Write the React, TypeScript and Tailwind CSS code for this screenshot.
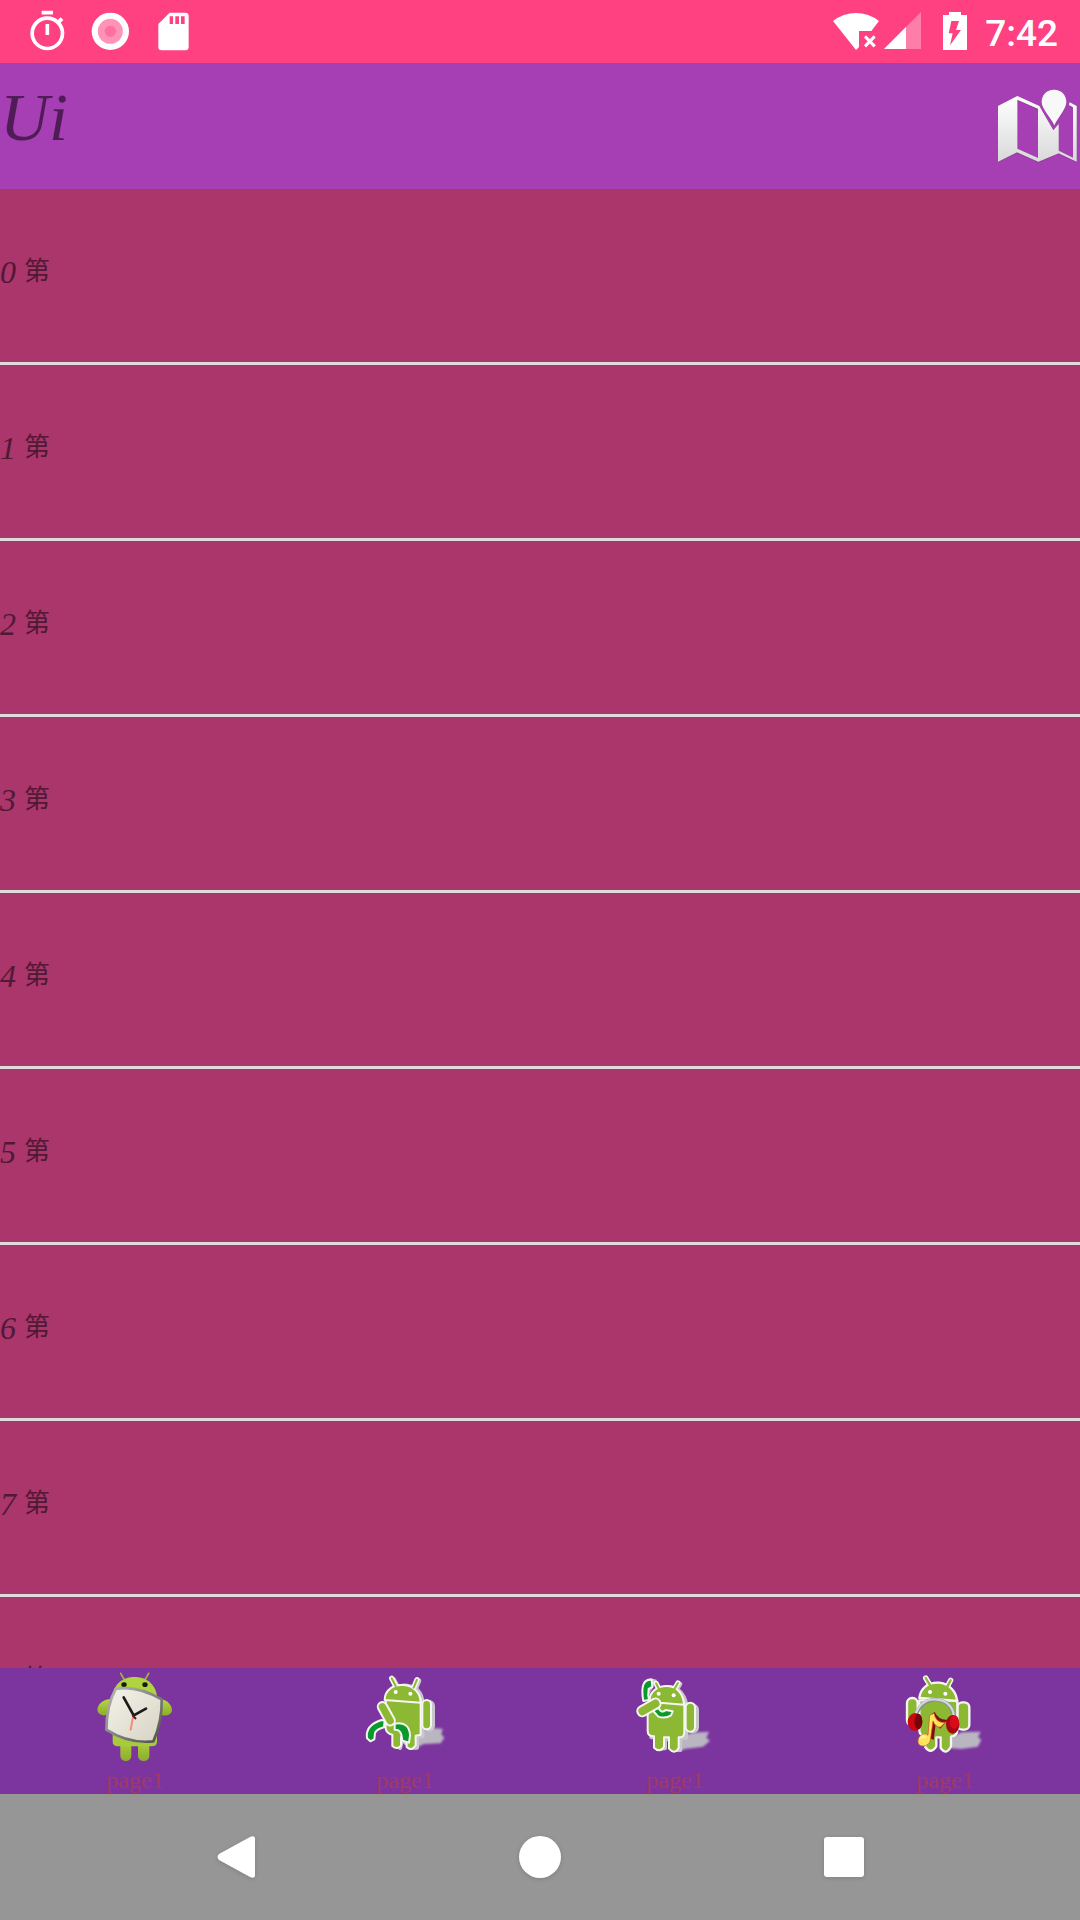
import React from "react";

const rows = [0, 1, 2, 3, 4, 5, 6, 7, 8];

function StatusBar() {
  return (
    <header className="flex h-[63px] shrink-0 items-center justify-between bg-[#ff4081] pl-7 pr-[22px] text-white">
      <div className="flex items-center gap-[22px]">
        <svg className="h-[45px] w-10" viewBox="84 27 120 135" fill="none" stroke="currentColor" aria-label="Timer">
          <circle cx="142" cy="100" r="45.500" strokeWidth="11" />
          <path d="M125 38H159M142 72V105" strokeWidth="11" />
          <path d="M174 68L186 56" strokeWidth="12" />
        </svg>
        <svg className="h-[45px] w-10" viewBox="270 27 120 135" fill="currentColor" aria-label="Recording">
          <circle cx="331" cy="94" r="56" />
          <circle cx="331" cy="94" r="37.500" fill="#ff93b7" />
          <circle cx="331" cy="94" r="17" fill="#ff70a1" />
        </svg>
        <svg className="h-[45px] w-10" viewBox="456 27 120 135" aria-label="Storage card">
          <path d="M509 38H556Q566 38 566 48V141Q566 151 556 151H485Q475 151 475 141V72Z" fill="currentColor" />
          <path d="M509 49H519V72H509ZM526 49H537V72H526ZM543 49H554V72H543Z" fill="#ff4081" />
        </svg>
      </div>
      <div className="flex items-center">
        <svg className="h-[45px] w-12" viewBox="66 27 144 135" fill="currentColor" aria-label="No Wi-Fi">
          <path d="M69 63Q100 39 138 39T207 63L184 93H147V141L138 150Z" />
          <path d="M165 109L194 139M194 109L165 139" stroke="currentColor" strokeWidth="9" fill="none" />
        </svg>
        <svg className="ml-[3px] h-[45px] w-[39px]" viewBox="219 27 117 135" fill="currentColor" aria-label="Signal">
          <path d="M333 36V147H222Z" fill="#ff7da9" />
          <path d="M288 81V147H222Z" />
        </svg>
        <svg className="ml-5 h-[45px] w-[26px]" viewBox="396 27 78 135" aria-label="Battery charging">
          <path d="M417 36H453V45H471V150H399V45H417Z" fill="currentColor" />
          <path d="M424 63H447L438 90H453L420 136L428 100H416Z" fill="#ff4081" />
        </svg>
        <time className="ml-[17px] pt-1 font-['Roboto',sans-serif] text-[37px] font-medium leading-[42px]">7:42</time>
      </div>
    </header>
  );
}

function MapIcon() {
  return (
    <svg className="size-[84px]" viewBox="558 252 252 252" aria-hidden="true">
      <defs>
        <linearGradient id="mapFill" x1="0" y1="0" x2="0" y2="1">
          <stop offset="0" stopColor="#ffffff" />
          <stop offset="1" stopColor="#d9d9d9" />
        </linearGradient>
        <filter id="mapShadow" x="-10%" y="-10%" width="120%" height="120%">
          <feDropShadow dx="0" dy="1" stdDeviation="2" floodColor="#43204d" floodOpacity="0.7" />
        </filter>
      </defs>
      <g filter="url(#mapShadow)">
        <path
          fillRule="evenodd"
          fill="url(#mapFill)"
          d="M564 318L622 288L688 318L730 391L746 372V452L789 473V322L777 315L779 307L800 318V485L746 460L685 485L621 457L564 485ZM622 299V446L684 474V326Z"
        />
        <path d="M732 269C754 269 769 285 769 306C769 326 745 350 733 376C721 350 695 326 695 306C695 285 710 269 732 269Z" fill="#f8f8f8" />
      </g>
    </svg>
  );
}

function ClockRobot() {
  return (
    <svg className="h-[100px] w-[120px] shrink-0" viewBox="-15 54 360 300" aria-hidden="true">
      <defs>
        <linearGradient id="robotGreen" x1="0" y1="0" x2="0" y2="1">
          <stop offset="0" stopColor="#b5d63f" />
          <stop offset="1" stopColor="#8aad2e" />
        </linearGradient>
        <linearGradient id="rim" x1="0" y1="0" x2="1" y2="1">
          <stop offset="0" stopColor="#b9bab8" />
          <stop offset="1" stopColor="#4c4f4d" />
        </linearGradient>
        <linearGradient id="face" x1="0" y1="0" x2="1" y2="1">
          <stop offset="0" stopColor="#f5f3ea" />
          <stop offset="1" stopColor="#d6d3c4" />
        </linearGradient>
      </defs>
      <path d="M122 70L134 91M206 70L194 91" stroke="#9abd39" strokeWidth="5" strokeLinecap="round" />
      <rect x="121" y="262" width="33" height="71" rx="16" fill="url(#robotGreen)" />
      <rect x="174" y="262" width="34" height="71" rx="16" fill="url(#robotGreen)" />
      <path d="M98 235H231V276Q230 289 216 289H114Q98 288 98 276Z" fill="#a6cb3b" />
      <path d="M90 148C73 146 52 162 52 180C54 196 75 200 85 192ZM240 148C259 147 276 165 276 181C274 197 252 201 240 192Z" fill="url(#robotGreen)" />
      <path d="M97 145C98 105 126 81 164 81S231 106 232 149Z" fill="#b0d43f" />
      <ellipse cx="132" cy="104" rx="8" ry="7" fill="#151b12" />
      <ellipse cx="195" cy="104" rx="8" ry="7" fill="#151b12" />
      <path d="M107 117Q169 105 245 148Q247 214 220 274Q145 282 79 239Q80 165 107 117Z" fill="url(#face)" stroke="url(#rim)" strokeWidth="8" strokeLinejoin="round" />
      <path d="M159 201L152 239" stroke="#f58a7d" strokeWidth="6" strokeLinecap="round" />
      <path d="M131 142L161 196L198 176" stroke="#171c1a" strokeWidth="8" strokeLinecap="round" fill="none" />
      <path d="M157 195L168 207" stroke="#60191b" strokeWidth="6" />
    </svg>
  );
}

function Shadow({ d }: { d: string }) {
  return <path d={d} fill="#b9b6c2" className="blur-[3px]" />;
}

function DialRobot() {
  return (
    <svg className="h-[100px] w-[120px] shrink-0" viewBox="-15 54 360 300" aria-hidden="true">
      <Shadow d="M205 250L237 234L278 236L274 253L283 263L272 280L222 282L190 297Z" />
      <g transform="translate(7 3)" fill="#aaa4b4" stroke="#c9c6ce" strokeWidth="12" strokeLinejoin="round">
        <path d="M107 148Q120 101 164 104Q207 108 211 157V256H194V290H174L150 265L143 291L126 278V248L107 230Z" />
        <path d="M125 85L137 108M201 89L191 113" strokeLinecap="round" />
        <rect x="219" y="153" width="23" height="83" rx="12" />
      </g>
      <g fill="#8db833" stroke="#f5f6f2" strokeWidth="6" strokeLinejoin="round">
        <path d="M125 85L137 108M201 89L191 113" strokeWidth="16" strokeLinecap="round" />
        <path d="M107 148H212V254L197 257V286Q185 305 170 291V269L153 261V287Q142 301 127 288V254Q109 250 107 235Z" />
        <path d="M104 150C104 120 131 102 161 105C192 107 212 130 212 158Z" />
        <path d="M125 85L137 108M201 89L191 113" stroke="#8db833" strokeLinecap="round" />
        <rect x="217" y="150" width="26" height="88" rx="13" />
        <path d="M61 274L51 265Q45 226 94 210L104 212L102 232Q80 238 75 249L73 268Z" fill="#0b982d" />
        <path d="M134 221Q179 214 180 257L177 278L157 272L154 254Q150 238 134 239Z" fill="#0b982d" />
        <rect x="94" y="154" width="28" height="76" rx="14" transform="rotate(-29 107 190)" />
      </g>
      <circle cx="137" cy="126" r="6" fill="white" />
      <circle cx="181" cy="131" r="6" fill="white" />
    </svg>
  );
}

function CallRobot() {
  return (
    <svg className="h-[100px] w-[120px] shrink-0" viewBox="-15 54 360 300" aria-hidden="true">
      <Shadow d="M182 265L214 248L267 245L259 263L270 272L249 290L198 296L174 303Z" />
      <g transform="translate(7 3)" fill="#aaa4b4" stroke="#c9c6ce" strokeWidth="12" strokeLinejoin="round">
        <path d="M88 150Q96 112 137 109Q179 108 192 160V260H174V297H153L146 265H128V292L106 293V259H87Z" />
        <path d="M174 99L162 119" strokeLinecap="round" />
        <rect x="199" y="164" width="25" height="77" rx="12" />
        <path d="M73 148Q61 98 87 88L101 92" />
      </g>
      <g fill="#8db833" stroke="#f5f6f2" strokeWidth="6" strokeLinejoin="round">
        <path d="M70 153Q58 86 95 89L97 111L86 117Q83 135 87 150Z" fill="#0b982d" />
        <path d="M108 100L118 119M174 99L162 119" strokeWidth="16" strokeLinecap="round" />
        <path d="M83 158H193V247Q193 263 176 262V294Q164 315 147 296V262H132V290Q120 310 102 293V259Q83 259 83 243Z" />
        <path d="M88 151C90 124 112 107 143 108C172 110 190 132 192 164L119 158Z" />
        <path d="M108 100L118 119M174 99L162 119" stroke="#8db833" strokeLinecap="round" />
        <rect x="197" y="158" width="28" height="87" rx="14" />
        <path d="M97 180L116 174Q124 192 137 180L158 184L153 196Q137 207 115 200Z" fill="#0b982d" />
        <rect x="49" y="158" width="75" height="30" rx="14" transform="rotate(-30 85 172)" />
      </g>
      <circle cx="116" cy="131" r="6" fill="white" />
      <circle cx="161" cy="136" r="6" fill="white" />
    </svg>
  );
}

function MusicRobot() {
  return (
    <svg className="h-[100px] w-[120px] shrink-0" viewBox="-15 54 360 300" aria-hidden="true">
      <Shadow d="M180 264L215 247L272 245L264 261L274 270L263 290L213 297L178 294Z" />
      <g fill="#8db833" stroke="#f5f6f2" strokeWidth="7" strokeLinejoin="round">
        <path d="M107 84L121 107M182 91L170 113" strokeWidth="16" strokeLinecap="round" />
        <rect x="51" y="144" width="32" height="82" rx="15" />
        <rect x="202" y="157" width="36" height="82" rx="15" />
        <path d="M88 151H202V241Q200 259 183 260V289Q169 318 152 294V262H139V289Q123 314 106 292V259Q88 257 88 240Z" />
        <path d="M88 144C92 112 117 96 146 98C178 100 200 126 201 153Z" />
        <path d="M107 84L121 107M182 91L170 113" stroke="#8db833" strokeLinecap="round" />
      </g>
      <circle cx="120" cy="126" r="6" fill="white" />
      <circle cx="166" cy="131" r="6" fill="white" />
      <path d="M78 194C91 160 113 147 142 150C172 153 189 169 192 205" fill="none" stroke="#858b94" strokeWidth="11" />
      <path d="M77 191C91 156 114 145 143 149C173 154 189 170 192 200" fill="none" stroke="#d2d6de" strokeWidth="7" />
      <ellipse cx="75" cy="216" rx="22" ry="27" fill="#cc0712" />
      <ellipse cx="85" cy="214" rx="12" ry="23" fill="#75050b" />
      <ellipse cx="188" cy="223" rx="20" ry="28" fill="#a60710" />
      <ellipse cx="193" cy="216" rx="14" ry="20" fill="#d60d18" />
      <path d="M124 193L134 186Q147 212 173 209L151 236L137 222L131 270L115 262Z" fill="#7d1110" />
      <path d="M119 196L132 190Q138 221 166 217L151 232Q136 231 129 213L122 264C122 281 109 289 96 288C81 286 81 267 91 257C99 249 109 251 114 256Z" fill="#ffe45b" stroke="#d94824" strokeWidth="2" strokeLinejoin="round" />
      <path d="M90 268Q96 256 109 263" fill="none" stroke="#fff49b" strokeWidth="6" />
    </svg>
  );
}

const tabs = [ClockRobot, DialRobot, CallRobot, MusicRobot];

export default function App() {
  return (
    <div className="flex h-screen flex-col overflow-hidden bg-[#aa366b]">
      <StatusBar />
      <div className="flex h-[126px] shrink-0 items-center justify-between bg-[#a73fb4]">
        <h1 className="self-start pt-4 font-['Liberation_Serif',serif] text-[68px] italic leading-[76px] text-[#501c57]">Ui</h1>
        <button type="button" aria-label="Map">
          <MapIcon />
        </button>
      </div>
      <ul className="min-h-0 flex-1 overflow-hidden">
        {rows.map((row) => (
          <li
            key={row}
            className="flex h-[176px] items-center whitespace-pre border-b-[3px] border-[#dcdcdc] pb-2 font-['Liberation_Serif','Noto_Sans_CJK_SC',serif] text-[32px] italic leading-8 text-[#511934]"
          >
            {row} <span className="text-[26px] not-italic">第</span>
          </li>
        ))}
      </ul>
      <nav className="grid h-[126px] shrink-0 grid-cols-4 overflow-hidden bg-[#7c359f]">
        {tabs.map((Icon, index) => (
          <button
            key={index}
            type="button"
            className="flex min-w-0 flex-col items-center overflow-hidden font-['Liberation_Serif',serif] text-2xl leading-6 text-[#a13a62]"
          >
            <Icon />
            <span>page1</span>
          </button>
        ))}
      </nav>
      <div className="flex h-[126px] shrink-0 items-center justify-between bg-[#969696] px-[214px]">
        <button type="button" aria-label="Back">
          <svg className="size-11 drop-shadow-sm" viewBox="0 0 44 44" fill="white">
            <path d="M5 19L36 2Q41 0 41 4V40Q41 44 36 42L5 25Q2 22 5 19Z" />
          </svg>
        </button>
        <button type="button" aria-label="Home">
          <svg className="size-11 drop-shadow-sm" viewBox="0 0 44 44" fill="white">
            <circle cx="22" cy="22" r="21" />
          </svg>
        </button>
        <button type="button" aria-label="Recent apps">
          <svg className="size-11 drop-shadow-sm" viewBox="0 0 44 44" fill="white">
            <rect x="2" y="2" width="40" height="40" rx="3" />
          </svg>
        </button>
      </div>
    </div>
  );
}
